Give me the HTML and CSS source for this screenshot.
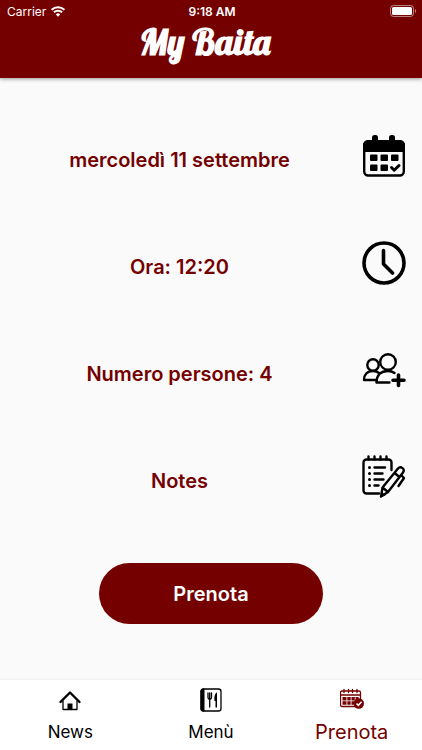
FILE: index.html
```html
<!DOCTYPE html>
<html lang="it">

<head>
    <meta charset="UTF-8">
    <meta name="viewport" content="width=device-width, initial-scale=1.0">
    <title>My Baita</title>
    <link rel="stylesheet" href="styles.css">
</head>

<body>
    <header class="app-bar">
        <div class="status-bar">
            <div class="carrier">
                <span>Carrier</span>
                <svg class="wifi" viewBox="0 0 14 11" aria-hidden="true">
                    <path d="M0.6 3.9a9.2 9.2 0 0 1 12.8 0M2.9 6.3a5.9 5.9 0 0 1 8.2 0" />
                    <path class="wifi-dot" d="M4.8 8.4a3.2 3.2 0 0 1 4.4 0L7 10.7z" />
                </svg>
            </div>
            <span class="clock">9:18 AM</span>
            <svg class="battery" viewBox="0 0 27 12" aria-hidden="true">
                <rect class="battery-case" x="0.5" y="0.5" width="23" height="11" rx="3" />
                <rect x="2" y="2" width="20" height="8" rx="1.5" />
                <path class="battery-tip" d="M25 4c1.6 0.6 1.6 3.4 0 4z" />
            </svg>
        </div>
        <h1 class="logo">My Baita</h1>
    </header>

    <main class="booking">
        <button type="button" class="row">
            <span class="row-text">mercoledì 11 settembre</span>
            <svg class="row-icon" viewBox="0 0 44 44" aria-hidden="true">
                <rect x="2.2" y="7.5" width="39.6" height="34" rx="4" class="line" />
                <path d="M1 18v-7a5 5 0 0 1 5-5h32a5 5 0 0 1 5 5v7z" />
                <rect x="10" y="1" width="6" height="9" rx="2.5" />
                <rect x="27" y="1" width="6" height="9" rx="2.5" />
                <rect x="8" y="20.5" width="7.5" height="6.5" rx="1" />
                <rect x="18.5" y="20.5" width="7.5" height="6.5" rx="1" />
                <rect x="29" y="20.5" width="7.5" height="6.5" rx="1" />
                <rect x="8" y="30.5" width="7.5" height="6.5" rx="1" />
                <rect x="18.5" y="30.5" width="7.5" height="6.5" rx="1" />
                <path d="M29.5 33.5l2.7 2.7 4.8-4.7" class="line thick" />
            </svg>
        </button>

        <button type="button" class="row">
            <span class="row-text">Ora: 12:20</span>
            <svg class="row-icon" viewBox="0 0 44 44" aria-hidden="true">
                <circle cx="22" cy="22" r="20" class="line heavy" />
                <path d="M21.5 9.5v13.5l9 9" class="line heavy" />
            </svg>
        </button>

        <button type="button" class="row">
            <span class="row-text">Numero persone: 4</span>
            <svg class="row-icon" viewBox="0 0 44 44" aria-hidden="true">
                <circle cx="11" cy="17" r="5.7" class="line" />
                <circle cx="26" cy="14" r="7.8" class="line" />
                <path d="M14 32H2c0-5 3-9 9-9 2.5 0 4.5 0.7 6 2" class="line" />
                <path d="M27.5 34.5h-13c0-7 4-11.5 11.5-11.5 2.5 0 4.5 0.5 6.5 2" class="line" />
                <path d="M36.5 27v10.5M31 32.2h11" class="line heavy" />
            </svg>
        </button>

        <button type="button" class="row">
            <span class="row-text">Notes</span>
            <svg class="row-icon" viewBox="0 0 44 44" aria-hidden="true">
                <path d="M29.5 15V7.5a3 3 0 0 0-3-3h-22a3 3 0 0 0-3 3v28a3 3 0 0 0 3 3H17" class="line" />
                <path d="M6.5 1.5v3M12.5 1.5v3M18.5 1.5v3M24.5 1.5v3" class="line" />
                <path d="M12.5 12.5h10.5M12.5 18.5h8M12.5 24.5h9M12.5 30.5h4" class="line" />
                <circle cx="7.5" cy="12.5" r="1.5" />
                <circle cx="7.5" cy="18.5" r="1.5" />
                <circle cx="7.5" cy="24.5" r="1.5" />
                <circle cx="7.5" cy="30.5" r="1.5" />
                <path d="M19 41.5l1.5-9L36 13.5c1.3-1.5 3-1.5 4.5-0.4s1.7 2.9 0.5 4.4L26 37zM20.5 32.5l5.5 4.5M32.5 18l5 4" class="line pen" />
                <path d="M39.5 20.5l2.5 2.5-5.5 8" class="line" />
                <path d="M18.5 42.5l1-5.5 4.5 3z" />
            </svg>
        </button>

        <button type="submit" class="submit">Prenota</button>
    </main>

    <nav class="tab-bar">
        <a href="#news" class="tab">
            <svg class="tab-icon" viewBox="0 0 24 24" aria-hidden="true">
                <path d="M2.5 14L12 4.5l9.5 9.5" class="line" />
                <path d="M5 13v8.5h14V13" class="line thin" />
                <rect x="9.5" y="15.5" width="5" height="6" />
            </svg>
            <span class="tab-label">News</span>
        </a>
        <a href="#menu" class="tab">
            <svg class="tab-icon" viewBox="0 0 24 24" aria-hidden="true">
                <rect x="2" y="1" width="20" height="22" rx="2.5" class="line thin" />
                <path d="M5 0.5H4a2.5 2.5 0 0 0-2.5 2.5v18A2.5 2.5 0 0 0 4 23.5h1.5v-23z" />
                <path d="M9 5v4.5a1.5 1.5 0 0 0 3.5 0V5M10.7 5v14" class="line thin" />
                <path d="M17.5 4.5c-2 1.5-2.5 5-2 8.5h1v6.5H18V4.5z" />
            </svg>
            <span class="tab-label">Menù</span>
        </a>
        <a href="#prenota" class="tab active" aria-current="page">
            <svg class="tab-icon" viewBox="0 0 24 24" aria-hidden="true">
                <path d="M15 18.5H2a1.5 1.5 0 0 1-1.5-1.5V4.5A1.5 1.5 0 0 1 2 3h17a1.5 1.5 0 0 1 1.5 1.5V12M0.5 7h20" class="line thin" />
                <path d="M4 1.5v3M8.5 1.5v3M12.5 1.5v3M17 1.5v3" class="line thin" />
                <path d="M2.5 9h4v3.5h-4zM7.3 9h3.4v3.5H7.3zM11.5 9h3.3v3.5h-3.3zM15.6 9h3v3h-3zM2.5 13.3h4v3.5h-4zM7.3 13.3h3.4v3.5H7.3zM11.5 13.3h2.5v3.5h-2.5z" />
                <circle cx="18.8" cy="15.5" r="5.2" />
                <path d="M16.5 15.5l1.8 1.8 3.3-3.5" class="check" />
            </svg>
            <span class="tab-label">Prenota</span>
        </a>
    </nav>
</body>

</html>
```
FILE: styles.css
```css
* {
    margin: 0;
    padding: 0;
    box-sizing: border-box;
}

body {
    display: flex;
    flex-direction: column;
    min-height: 100vh;
    background-color: #fafafa;
    font-family: Inter, 'Liberation Sans', sans-serif;
    color: #000;
}

button {
    border: none;
    background: none;
    font-family: inherit;
    cursor: pointer;
}

svg {
    display: block;
    fill: currentColor;
}

.line {
    fill: none;
    stroke: currentColor;
    stroke-width: 2.4;
    stroke-linecap: round;
    stroke-linejoin: round;
}

.thick {
    stroke-width: 3;
}

.heavy {
    stroke-width: 3.6;
}

.thin {
    stroke-width: 1.3;
}

/* header */
.app-bar {
    height: 78px;
    background-color: #750000;
    color: #fff;
    box-shadow: 0 1px 4px rgba(0, 0, 0, 0.4);
}

.status-bar {
    display: grid;
    grid-template-columns: 1fr auto 1fr;
    align-items: center;
    height: 22px;
    padding: 0 5px 0 7px;
    font-size: 12px;
}

.carrier {
    display: flex;
    align-items: center;
    gap: 5px;
}

.wifi {
    width: 14px;
    height: 11px;
    fill: none;
    stroke: #fff;
    stroke-width: 2;
}

.wifi-dot {
    fill: #fff;
    stroke: none;
}

.clock {
    font-weight: 600;
}

.battery {
    justify-self: end;
    width: 27px;
    height: 12px;
}

.battery-case {
    fill: none;
    stroke: #fff;
    opacity: 0.5;
}

.battery-tip {
    opacity: 0.5;
}

.logo {
    padding-right: 12px;
    font-family: Lobster, 'Liberation Serif', serif;
    font-size: 36px;
    font-weight: bold;
    line-height: 40px;
    text-align: center;
}

/* booking form */
.booking {
    flex: 1;
    display: flex;
    flex-direction: column;
    align-items: center;
    padding: 28px 0;
}

.row {
    display: flex;
    align-items: center;
    gap: 3px;
    width: 100%;
    min-height: 107px;
    padding-right: 16px;
    color: #000;
}

.row-text {
    flex: 1;
    color: #750000;
    font-size: 20px;
    font-weight: 600;
    line-height: 24px;
}

.row-icon {
    width: 44px;
    height: 44px;
    margin-bottom: 8px;
}

.pen {
    fill: #fafafa;
}

.submit {
    width: 53%;
    height: 61px;
    margin-top: 29px;
    border-radius: 31px;
    background-color: #750000;
    color: #fff;
    font-size: 20px;
    font-weight: 600;
}

/* bottom navigation */
.tab-bar {
    display: flex;
    height: 70px;
    background-color: #fff;
    box-shadow: 0 -1px 2px rgba(0, 0, 0, 0.05);
}

.tab {
    flex: 1;
    display: flex;
    flex-direction: column;
    align-items: center;
    gap: 8px;
    padding-top: 8px;
    color: #000;
    text-decoration: none;
}

.tab-icon {
    width: 24px;
    height: 24px;
}

.tab-label {
    font-size: 17px;
    line-height: 24px;
}

.active {
    color: #750000;
}

.active .tab-label {
    font-size: 20px;
}

.check {
    fill: none;
    stroke: #fff;
    stroke-width: 1.5;
}
```
